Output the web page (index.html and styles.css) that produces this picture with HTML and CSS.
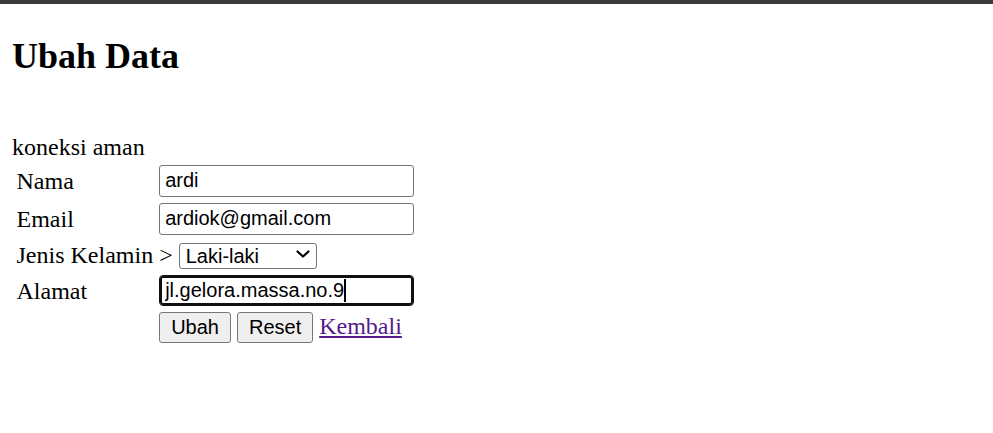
FILE: index.html
```html
<!DOCTYPE html>
<html lang="id">
<head>
<meta charset="utf-8">
<title>Ubah Data</title>
<link rel="stylesheet" href="styles.css">
</head>
<body>
<div class="topbar"></div>
<main class="page">
  <h1 class="title">Ubah Data</h1>
  <p class="status">koneksi aman</p>
  <form class="form">
    <table class="form-table">
      <tr>
        <td class="label">Nama</td>
        <td><input class="field" type="text" value="ardi"></td>
      </tr>
      <tr>
        <td class="label">Email</td>
        <td><input class="field" type="text" value="ardiok@gmail.com"></td>
      </tr>
      <tr>
        <td class="label">Jenis Kelamin</td>
        <td class="inline-cell">&gt; <span class="select-wrap"><select class="select"><option>Laki-laki</option><option>Perempuan</option></select><svg class="chevron" width="14" height="8" viewBox="0 0 14 8"><path d="M1.5 1.5 L7 6.5 L12.5 1.5" fill="none" stroke="#000" stroke-width="2.2" stroke-linecap="round" stroke-linejoin="round"/></svg></span></td>
      </tr>
      <tr>
        <td class="label">Alamat</td>
        <td><span class="field-wrap"><input class="field field-focus" type="text" value="jl.gelora.massa.no.9"><span class="caret"></span></span></td>
      </tr>
      <tr>
        <td></td>
        <td class="inline-cell"><button class="btn" type="button">Ubah</button> <button class="btn" type="reset">Reset</button> <a class="link" href="#">Kembali</a></td>
      </tr>
    </table>
  </form>
</main>
</body>
</html>
```
FILE: styles.css
```css
html, body {
  margin: 0;
  padding: 0;
  background: #ffffff;
}

body {
  font-family: "Liberation Serif", "Times New Roman", serif;
  font-size: 24px;
  color: #000000;
}

.topbar {
  height: 4px;
  background: #3b3b3b;
}

.page {
  padding: 32px 12px 0 12px;
}

.title {
  margin: 0;
  font-size: 36px;
  line-height: 41px;
  font-weight: bold;
}

.status {
  margin: 56px 0 0 0;
  line-height: 28px;
}

.form {
  margin: 0;
}

.form-table {
  border-collapse: separate;
  border-spacing: 3px;
  margin-top: -1px;
}

.form-table td {
  padding: 1.5px;
  vertical-align: middle;
  line-height: 28px;
}

.label {
  white-space: nowrap;
}

.inline-cell {
  white-space: nowrap;
}

.field {
  display: block;
  box-sizing: border-box;
  width: 255px;
  height: 32px;
  margin: 0;
  padding: 0 5px;
  border: 1px solid #767676;
  border-radius: 3px;
  background: #ffffff;
  font-family: "Liberation Sans", Arial, sans-serif;
  font-size: 20px;
  line-height: 23px;
  color: #000000;
  outline: none;
}

.field-wrap {
  display: block;
  position: relative;
  width: 255px;
}

.field-focus {
  height: 31px;
  border-color: #101010;
  box-shadow: inset 0 0 0 2px #101010;
  border-radius: 4px;
}

.caret {
  position: absolute;
  left: 185px;
  top: 4px;
  width: 2px;
  height: 23px;
  background: #000000;
}

.select-wrap {
  display: inline-block;
  position: relative;
  vertical-align: baseline;
}

.select {
  -webkit-appearance: none;
  appearance: none;
  box-sizing: border-box;
  width: 138px;
  height: 26px;
  margin: 0;
  padding: 0 4px 0 6px;
  border: 1px solid #767676;
  border-radius: 3px;
  background: #ffffff;
  font-family: "Liberation Sans", Arial, sans-serif;
  font-size: 20px;
  line-height: 23px;
  color: #000000;
}

.chevron {
  position: absolute;
  right: 7px;
  top: 9px;
  pointer-events: none;
}

.btn {
  box-sizing: border-box;
  height: 31px;
  margin: 0;
  padding: 0 11px;
  border: 1px solid #767676;
  border-radius: 3px;
  background: #efefef;
  font-family: "Liberation Sans", Arial, sans-serif;
  font-size: 20px;
  line-height: 23px;
  color: #000000;
}

.link {
  color: #551a8b;
  text-decoration: underline;
}
```
